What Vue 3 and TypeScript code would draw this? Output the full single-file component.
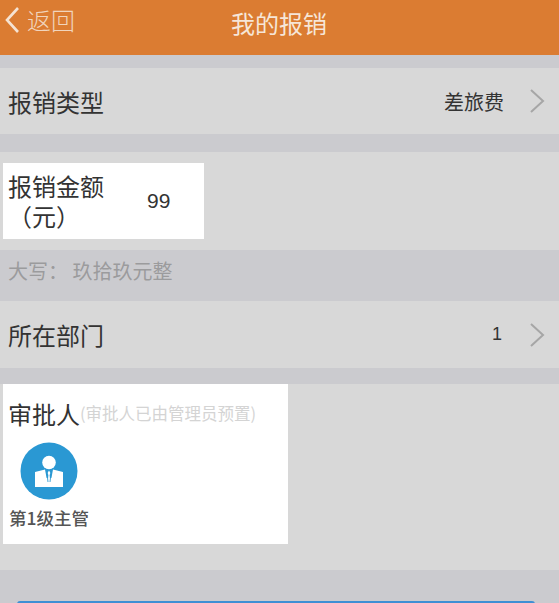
<script setup lang="ts">
interface SelectRow {
  label: string
  value: string
}
const typeRow: SelectRow = { label: '报销类型', value: '差旅费' }
const deptRow: SelectRow = { label: '所在部门', value: '1' }
</script>

<template>
  <div class="page">
    <header class="nav">
      <div class="back">
        <svg class="back-icon" viewBox="0 0 18 30" width="18" height="30">
          <path d="M15 3 L4 15 L15 27" fill="none" stroke="currentColor" stroke-width="2.6" />
        </svg>
        <span>返回</span>
      </div>
      <h1 class="title">我的报销</h1>
    </header>

    <section class="row type-row">
      <span class="label">{{ typeRow.label }}</span>
      <span class="value cjk-value">{{ typeRow.value }}</span>
      <svg class="chev" viewBox="0 0 16 26" width="16" height="26">
        <path d="M2 2 L14 13 L2 24" fill="none" stroke="currentColor" stroke-width="2" />
      </svg>
    </section>

    <section class="amount">
      <div class="amount-box">
        <div class="amount-label">报销金额<br /><span class="unit">（元）</span></div>
        <div class="amount-value">99</div>
      </div>
    </section>

    <div class="caption">大写： 玖拾玖元整</div>

    <section class="row dept-row">
      <span class="label">{{ deptRow.label }}</span>
      <span class="value num-value">{{ deptRow.value }}</span>
      <svg class="chev" viewBox="0 0 16 26" width="16" height="26">
        <path d="M2 2 L14 13 L2 24" fill="none" stroke="currentColor" stroke-width="2" />
      </svg>
    </section>

    <section class="approver">
      <div class="approver-box">
        <div class="approver-head">
          <span class="approver-title">审批人</span><span class="approver-hint">(审批人已由管理员预置)</span>
        </div>
        <div class="avatar">
          <svg viewBox="0 0 58 58" width="58" height="58">
            <circle cx="29" cy="29" r="28.5" fill="#2A98D3" />
            <circle cx="29" cy="20.5" r="6.8" fill="#fff" />
            <path d="M15 30 L25 27.5 L28 43.5 L15 44.5 Z M43 30 L33 27.5 L30 43.5 L43 44.5 Z" fill="#fff" />
            <path d="M15 36 H43 V45 H15 Z" fill="#fff" />
            <path d="M29 28.5 L27.5 31 L28.4 33 L27.6 41 L29 43 L30.4 41 L29.6 33 L30.5 31 Z" fill="#fff" />
            <path d="M26.6 28 L28 40 M31.4 28 L30 40" stroke="#2A98D3" stroke-width="0.9" fill="none" />
          </svg>
        </div>
        <div class="level">第1级主管</div>
      </div>
    </section>

    <div class="footer">
      <div class="submit"></div>
    </div>
  </div>
</template>

<style>
html, body { margin: 0; padding: 0; overflow: hidden; }
</style>

<style scoped>
.page {
  width: 559px;
  height: 603px;
  overflow: hidden;
  background: #cbcbcf;
  font-family: "Noto Sans CJK SC", "Liberation Sans", sans-serif;
  color: #333;
}
.nav {
  height: 55px;
  background: #db7c32;
  display: flex;
  align-items: center;
  justify-content: center;
  position: relative;
  color: #f3dcc8;
  margin-bottom: 13px;
}
.back {
  position: absolute;
  left: 3px;
  top: 5px;
  display: flex;
  align-items: center;
  gap: 6px;
  font-size: 24px;
  line-height: 30px;
  font-weight: 300;
  color: #f1d5bd;
}
.back-icon { color: #f5e3d3; }
.title {
  margin: 0 0 9px -1px;
  font-size: 24px;
  line-height: 30px;
  font-weight: 400;
  color: #f6e6d8;
}
.row {
  height: 66px;
  background: #d8d8d8;
  display: flex;
  align-items: center;
  padding: 0 14px 0 8px;
}
.type-row { margin-bottom: 18px; }
.dept-row { height: 67px; margin-bottom: 16px; }
.label {
  font-size: 24px;
  color: #333;
  flex: 1;
}
.value { color: #333; margin-right: 25px; }
.cjk-value { font-size: 20px; }
.num-value { font-size: 18px; font-family: "Liberation Sans", sans-serif; margin-right: 27px; }
.chev { color: #a6a6a6; }
.amount {
  height: 98px;
  box-sizing: border-box;
  padding: 11px 0 0 3px;
  background: #d8d8d8;
}
.amount-box {
  width: 201px;
  height: 76px;
  background: #fff;
  display: flex;
  align-items: center;
}
.amount-label {
  width: 144px;
  padding-left: 5px;
  box-sizing: border-box;
  font-size: 24px;
  line-height: 30px;
  color: #333;
}
.unit { margin-left: 0; }
.amount-value {
  font-family: "Liberation Sans", sans-serif;
  font-size: 21px;
  color: #333;
}
.caption {
  height: 51px;
  box-sizing: border-box;
  padding: 7px 0 0 8px;
  font-size: 20px;
  line-height: 28px;
  color: #9b9b9d;
}
.approver {
  height: 186px;
  background: #d8d8d8;
  margin-bottom: 31px;
}
.approver-box {
  width: 285px;
  height: 160px;
  margin-left: 3px;
  background: #fff;
  box-sizing: border-box;
  padding: 10px 0 0 5px;
}
.approver-head {
  display: flex;
  align-items: center;
  height: 38px;
}
.approver-title { font-size: 24px; color: #333; }
.approver-hint { font-size: 16.5px; color: #d4d4d4; }
.avatar { height: 58px; margin: 10px 0 0 12px; }
.level { font-size: 17.5px; line-height: 24px; margin-top: 6px; color: #555; font-weight: 500; margin-left: 1px; }
.footer { padding: 0 24px 0 17px; }
.submit {
  height: 4px;
  border-radius: 3px 3px 0 0;
  background: #3f8fd4;
}
</style>
